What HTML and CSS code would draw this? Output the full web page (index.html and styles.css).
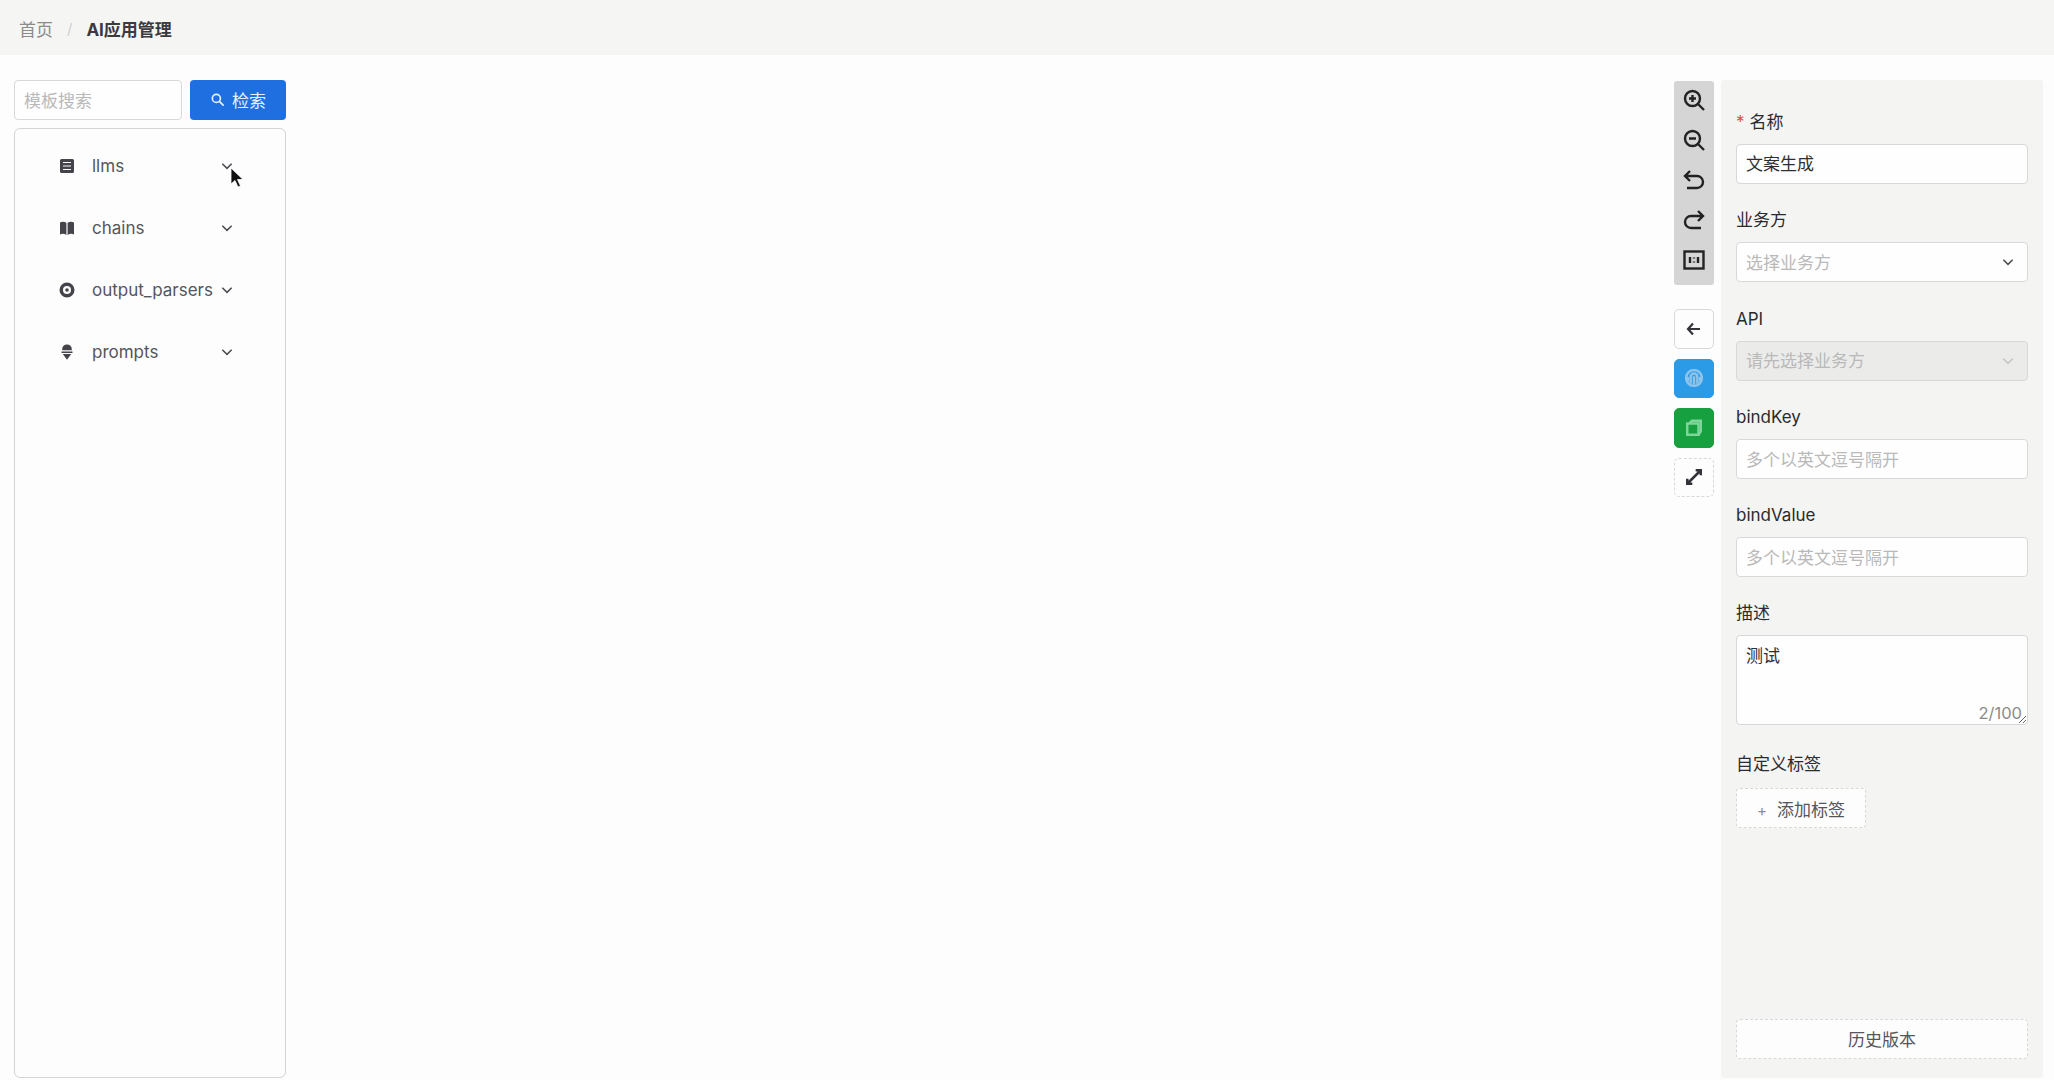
FILE: index.html
```html
<!DOCTYPE html>
<html lang="en">
<head>
    <meta charset="UTF-8">
    <meta name="viewport" content="width=device-width, initial-scale=1.0">
    <title>AI应用管理</title>
    <link rel="stylesheet" href="styles.css">
</head>
<body>
    <header class="top-bar">
        <span class="crumb">首页</span>
        <span class="crumb-sep">/</span>
        <span class="crumb-current">AI应用管理</span>
    </header>

    <main class="workspace">
        <aside class="template-side">
            <div class="search-row">
                <input class="text-input search-input" type="text" placeholder="模板搜索">
                <button class="search-btn" type="button">
                    <svg class="search-icon" viewBox="0 0 16 16" fill="none" stroke="currentColor" stroke-width="1.8" stroke-linecap="round"><circle cx="6.8" cy="6.8" r="4.3"/><path d="M10 10l4 4"/></svg>
                    检索
                </button>
            </div>
            <div class="template-list">
                <div class="template-item">
                    <svg class="item-icon" viewBox="0 0 16 16"><path fill-rule="evenodd" d="M2.500 1h11A1.500 1.500 0 0 1 15 2.500v11a1.500 1.500 0 0 1-1.500 1.500h-11A1.500 1.500 0 0 1 1 13.500v-11A1.500 1.500 0 0 1 2.500 1zM4 4v1h8V4zm0 3.500v1h8v-1zM4 11v1h8v-1z"/></svg>
                    <span class="item-name">llms</span>
                    <svg class="chevron" viewBox="0 0 12 12"><path d="M2 4l4 4 4-4"/></svg>
                </div>
                <div class="template-item">
                    <svg class="item-icon" viewBox="0 0 16 16"><path d="M1 2.500C3 1.500 5.500 1.500 7.400 2.800V15C5.500 13.700 3 13.500 1 14.500zM15 2.500c-2-1-4.500-1-6.400.300V15c1.900-1.300 4.400-1.500 6.400-.500z"/></svg>
                    <span class="item-name">chains</span>
                    <svg class="chevron" viewBox="0 0 12 12"><path d="M2 4l4 4 4-4"/></svg>
                </div>
                <div class="template-item">
                    <svg class="item-icon" viewBox="0 0 16 16"><path fill-rule="evenodd" d="M8 .5a7.500 7.500 0 1 1 0 15 7.500 7.500 0 0 1 0-15zM8 4a4 4 0 1 0 0 8 4 4 0 0 0 0-8zm0 2.200a1.800 1.800 0 1 1 0 3.600 1.800 1.800 0 0 1 0-3.600z"/></svg>
                    <span class="item-name">output_parsers</span>
                    <svg class="chevron" viewBox="0 0 12 12"><path d="M2 4l4 4 4-4"/></svg>
                </div>
                <div class="template-item">
                    <svg class="item-icon" viewBox="0 0 16 16"><path d="M8 .5c2.800 0 4.800 2 4.800 4.500v1.300H3.200V5C3.200 2.500 5.200.5 8 .5zM2.500 7.500h11V9h-11zM3.800 10h8.400L8 15.800z"/></svg>
                    <span class="item-name">prompts</span>
                    <svg class="chevron" viewBox="0 0 12 12"><path d="M2 4l4 4 4-4"/></svg>
                </div>
            </div>
        </aside>

        <div class="canvas"></div>

        <div class="tool-column">
            <div class="zoom-tools">
                <svg class="tool-icon" viewBox="0 0 24 24"><circle cx="10.500" cy="10.500" r="7.500"/><path d="M16 16l6 6M10.500 7v7M7 10.500h7"/></svg>
                <svg class="tool-icon" viewBox="0 0 24 24"><circle cx="10.500" cy="10.500" r="7.500"/><path d="M16 16l6 6M7 10.500h7"/></svg>
                <svg class="tool-icon" viewBox="0 0 24 24"><path d="M8 3L3 8l5 5M3 8h12a5.500 5.500 0 0 1 0 12H5"/></svg>
                <svg class="tool-icon" viewBox="0 0 24 24"><path d="M16 3l5 5-5 5M21 8H9a5.500 5.500 0 0 0 0 12h10"/></svg>
                <svg class="tool-icon" viewBox="0 0 24 24"><rect x="2.500" y="3.500" width="19" height="17"/><path d="M8 9v6M16 9v6M12 9.500v1M12 13.500v1"/></svg>
            </div>
            <button class="square-btn" type="button">
                <svg class="btn-icon" viewBox="0 0 16 16"><path d="M7 2.500L2 8l5 5.500M2.500 8H14"/></svg>
            </button>
            <button class="square-btn btn-blue" type="button">
                <svg class="btn-icon btn-icon-lg" viewBox="0 0 16 16" stroke-width="1"><circle cx="8" cy="8" r="7"/><path d="M5 13V7a3 3 0 0 1 6 0v6M8 14V6.500M2.500 11V7M13.500 11V7"/></svg>
            </button>
            <button class="square-btn btn-green" type="button">
                <svg class="btn-icon btn-icon-lg" viewBox="0 0 16 16" stroke-width="1"><rect x="2" y="4" width="10" height="10"/><path d="M4 4l2-2.500h8V11l-2 3"/></svg>
            </button>
            <button class="square-btn btn-dashed" type="button">
                <svg class="btn-icon btn-icon-lg" viewBox="0 0 16 16" stroke-width="1.700"><path d="M2 14L14 2M9.500 2H14v4.500M2 9.500V14h4.500"/></svg>
            </button>
        </div>

        <form class="config-panel">
            <div class="field">
                <label class="field-label"><span class="required">*</span>名称</label>
                <input class="text-input has-value" type="text" value="文案生成">
            </div>
            <div class="field">
                <label class="field-label">业务方</label>
                <div class="select-box">
                    <span class="select-text">选择业务方</span>
                    <svg class="chevron" viewBox="0 0 12 12"><path d="M2 4l4 4 4-4"/></svg>
                </div>
            </div>
            <div class="field">
                <label class="field-label">API</label>
                <div class="select-box is-disabled">
                    <span class="select-text">请先选择业务方</span>
                    <svg class="chevron" viewBox="0 0 12 12"><path d="M2 4l4 4 4-4"/></svg>
                </div>
            </div>
            <div class="field">
                <label class="field-label">bindKey</label>
                <input class="text-input" type="text" placeholder="多个以英文逗号隔开">
            </div>
            <div class="field">
                <label class="field-label">bindValue</label>
                <input class="text-input" type="text" placeholder="多个以英文逗号隔开">
            </div>
            <div class="field field-desc">
                <label class="field-label">描述</label>
                <div class="textarea-wrap">
                    <textarea class="text-area">测试</textarea>
                    <span class="word-count">2/100</span>
                </div>
            </div>
            <div class="field">
                <label class="field-label">自定义标签</label>
                <button class="add-tag" type="button"><span class="add-mark">+</span>添加标签</button>
            </div>
            <button class="history-btn" type="button">历史版本</button>
        </form>
    </main>

    <svg class="mouse-cursor" viewBox="0 0 14 22"><path d="M1 1v16l4-3.500 3 6.500 2.500-1-3-6.500H13z" fill="#111" stroke="#fff" stroke-width="0.8"/></svg>
</body>
</html>
```
FILE: styles.css
```css
* {
    box-sizing: border-box;
    margin: 0;
    padding: 0;
}

body {
    font-family: Inter, "Noto Sans CJK SC", sans-serif;
    font-size: 17px;
    color: #2f2f33;
    background-color: #fdfdfd;
    height: 1080px;
    overflow: hidden;
    display: flex;
    flex-direction: column;
}

.top-bar {
    height: 55px;
    flex-shrink: 0;
    background-color: #f5f5f4;
    display: flex;
    align-items: center;
    padding: 2px 19px 0;
    font-size: 17px;
}

.crumb {
    color: #8b8b8b;
}

.crumb-sep {
    color: #d0d0d0;
    margin: 0 14px;
    font-size: 15px;
}

.crumb-current {
    font-weight: 700;
    color: #3a3a40;
}

.workspace {
    flex: 1;
    display: flex;
    padding: 25px 11px 2px 14px;
    min-height: 0;
}

.template-side {
    width: 272px;
    flex-shrink: 0;
    display: flex;
    flex-direction: column;
}

.search-row {
    display: flex;
    justify-content: space-between;
    margin-bottom: 8px;
}

.text-input {
    display: block;
    width: 100%;
    height: 40px;
    padding: 2px 9px 0;
    font-family: inherit;
    font-size: 17px;
    color: #2f2f33;
    background: #fefefe;
    border: 1px solid #d8d8d8;
    border-radius: 4px;
}

.text-input::placeholder {
    color: #b9b9b9;
    opacity: 1;
}

.has-value {
    padding: 0 9px 4px;
}

.search-input {
    width: 168px;
}

.search-btn {
    width: 96px;
    height: 40px;
    display: flex;
    align-items: center;
    justify-content: center;
    gap: 7px;
    padding-bottom: 1px;
    font-family: inherit;
    font-size: 17px;
    color: #e6f0ff;
    background-color: #1f6fe0;
    border: none;
    border-radius: 4px;
}

.search-icon {
    width: 15px;
    height: 15px;
}

.template-list {
    flex: 1;
    padding-top: 6px;
    background: #fdfdfd;
    border: 1px solid #d4d4d8;
    border-radius: 6px;
}

.template-item {
    height: 62px;
    display: flex;
    align-items: center;
    padding-left: 44px;
    color: #55555c;
}

.item-icon {
    width: 16px;
    height: 16px;
    fill: #44444a;
    flex-shrink: 0;
}

.item-name {
    margin-left: 17px;
    width: 128px;
    white-space: nowrap;
}

.chevron {
    width: 14px;
    height: 14px;
    fill: none;
    stroke: #4b4b50;
    stroke-width: 1.3;
    flex-shrink: 0;
}

.select-box .chevron {
    margin-right: 3px;
}

.canvas {
    flex: 1;
}

.tool-column {
    width: 40px;
    flex-shrink: 0;
    margin-right: 7px;
    padding-top: 1px;
    display: flex;
    flex-direction: column;
    gap: 10px;
}

.zoom-tools {
    height: 204px;
    margin-bottom: 14px;
    padding-top: 7px;
    background-color: #d5d5d5;
    border-radius: 3px;
    display: flex;
    flex-direction: column;
    align-items: center;
    gap: 16px;
}

.tool-icon {
    width: 24px;
    height: 24px;
    flex-shrink: 0;
    fill: none;
    stroke: #222;
    stroke-width: 2.4;
}

.square-btn {
    width: 40px;
    height: 39.5px;
    display: flex;
    align-items: center;
    justify-content: center;
    background: #fdfdfd;
    border: 1px solid #d8d8d8;
    border-radius: 5px;
}

.btn-icon {
    width: 16px;
    height: 16px;
    fill: none;
    stroke: #33333a;
    stroke-width: 2.2;
}

.btn-icon-lg {
    width: 18px;
    height: 18px;
}

.btn-blue {
    background-color: #2b9be8;
    border-color: #2b9be8;
}

.btn-blue .btn-icon {
    stroke: #8cc4ec;
}

.btn-green {
    background-color: #17a03f;
    border-color: #17a03f;
}

.btn-green .btn-icon {
    stroke: #7fd69a;
}

.btn-dashed {
    border-style: dashed;
}

.config-panel {
    width: 322px;
    flex-shrink: 0;
    position: relative;
    padding: 31px 15px 0;
    background-color: #f4f4f3;
    border-radius: 3px;
}

.field {
    margin-bottom: 25.3px;
}

.field-desc {
    margin-bottom: 28px;
}

.field-label {
    display: block;
    height: 22px;
    line-height: 22px;
    margin-bottom: 11px;
    color: #2b2b2f;
}

.required {
    color: #e5484d;
    margin-right: 5px;
}

.select-box {
    height: 40px;
    padding: 0 9px;
    display: flex;
    align-items: center;
    justify-content: space-between;
    background: #fefefe;
    border: 1px solid #d8d8d8;
    border-radius: 4px;
}

.select-text {
    color: #b9b9b9;
    margin-top: -2px;
}

.is-disabled {
    background: #ebebea;
}

.is-disabled .chevron {
    stroke: #c4c4c4;
}

.textarea-wrap {
    position: relative;
    height: 90px;
}

.text-area {
    display: block;
    width: 100%;
    height: 90px;
    padding: 6px 9px;
    font-family: inherit;
    font-size: 17px;
    color: #2f2f33;
    background: #fefefe;
    border: 1px solid #d8d8d8;
    border-radius: 4px;
}

.word-count {
    position: absolute;
    right: 6px;
    bottom: 2px;
    font-size: 16.5px;
    color: #8b8b8b;
}

.add-tag {
    width: 130px;
    height: 40px;
    margin-top: 2px;
    font-family: inherit;
    font-size: 17px;
    color: #55555c;
    background: #fdfdfd;
    border: 1px dashed #d8d8d8;
    border-radius: 4px;
}

.add-mark {
    margin-right: 10px;
    color: #8b8b8b;
    font-size: 15px;
}

.history-btn {
    position: absolute;
    left: 15px;
    right: 15px;
    bottom: 19px;
    height: 40px;
    padding-bottom: 2px;
    font-family: inherit;
    font-size: 17px;
    color: #55555c;
    background: #fdfdfd;
    border: 1px dashed #d8d8d8;
    border-radius: 4px;
}

.mouse-cursor {
    position: absolute;
    left: 230px;
    top: 167px;
    width: 14px;
    height: 22px;
}
```
